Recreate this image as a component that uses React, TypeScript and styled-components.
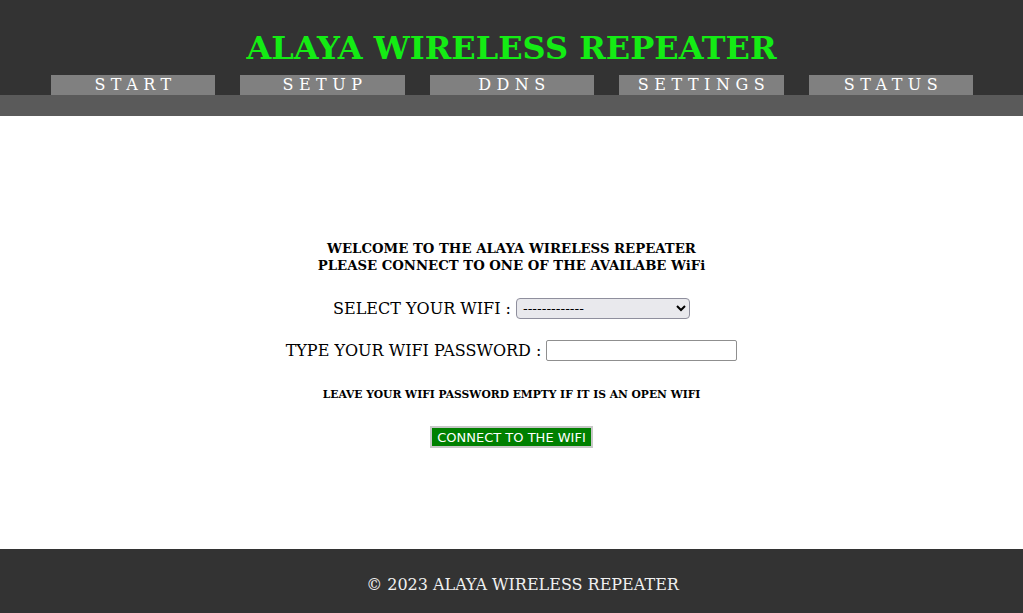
import React from "react";
import styled, { createGlobalStyle } from "styled-components";

const Global = createGlobalStyle`
  html, body { margin: 0; padding: 0; background: #fff; }
  body { font-family: "DejaVu Serif", serif; }
  * { box-sizing: border-box; }
`;

const Header = styled.header`
  background: #333333;
  padding-top: 30px;
  display: flex;
  flex-direction: column;
  align-items: center;
`;

const Title = styled.h1`
  margin: 0;
  font-family: "DejaVu Serif", serif;
  font-weight: bold;
  font-size: 32px;
  line-height: 37px;
  color: #14ec14;
`;

const Nav = styled.nav`
  margin-top: 8px;
  display: flex;
  justify-content: center;
  gap: 25px;
  width: 100%;
  padding-left: 1px;
`;

const NavItem = styled.a`
  width: 164.5px;
  height: 20px;
  background: #808080;
  color: #ffffff;
  font-size: 16px;
  line-height: 20px;
  letter-spacing: 5.5px;
  text-align: center;
  text-decoration: none;
  padding-left: 5px;
`;

const SubBar = styled.div`
  height: 21px;
  background: #5a5a5a;
`;

const Main = styled.main`
  height: 433px;
  padding-top: 124px;
  display: flex;
  flex-direction: column;
  align-items: center;
  color: #000;
`;

const Welcome = styled.h5`
  margin: 0;
  font-size: 13.28px;
  line-height: 17px;
  font-weight: bold;
  text-align: center;
`;

const Row = styled.div<{ $mt: number }>`
  margin-top: ${(p) => p.$mt}px;
  display: flex;
  align-items: center;
  gap: 5px;
  font-size: 16px;
  height: 21px;
`;

const Select = styled.select`
  width: 174px;
  height: 21px;
  font-family: "DejaVu Sans", sans-serif;
  font-size: 13px;
  background: #e9e9ed;
  border: 1px solid #8f8f9d;
  border-radius: 4px;
  padding: 0 2px;
`;

const Input = styled.input`
  width: 191px;
  height: 21px;
  border: 1px solid #8f8f8f;
  border-radius: 2px;
  font-size: 13px;
`;

const Note = styled.h6`
  margin: 27px 0 0;
  font-size: 10.72px;
  line-height: 13px;
  font-weight: bold;
`;

const Button = styled.button`
  margin-top: 25px;
  width: 163px;
  height: 22px;
  background: #008000;
  color: #ffffff;
  border: 2px solid #c8c8c8;
  font-family: "DejaVu Sans", sans-serif;
  font-size: 13px;
  padding: 0;
`;

const Footer = styled.footer`
  background: #333333;
  height: 64px;
  display: flex;
  align-items: center;
  justify-content: center;
  padding-left: 22px;
  padding-top: 6px;
  color: #f0f0f0;
  font-size: 16px;
`;

const items = ["START", "SETUP", "DDNS", "SETTINGS", "STATUS"];

export default function App() {
  return (
    <>
      <Global />
      <Header>
        <Title>ALAYA WIRELESS REPEATER</Title>
        <Nav>
          {items.map((i) => (
            <NavItem key={i} href="#">
              {i}
            </NavItem>
          ))}
        </Nav>
      </Header>
      <SubBar />
      <Main>
        <Welcome>
          WELCOME TO THE ALAYA WIRELESS REPEATER
          <br />
          PLEASE CONNECT TO ONE OF THE AVAILABE WiFi
        </Welcome>
        <Row $mt={24}>
          SELECT YOUR WIFI :
          <Select defaultValue="">
            <option value="">-------------</option>
          </Select>
        </Row>
        <Row $mt={21}>
          TYPE YOUR WIFI PASSWORD :
          <Input type="password" />
        </Row>
        <Note>LEAVE YOUR WIFI PASSWORD EMPTY IF IT IS AN OPEN WIFI</Note>
        <Button>CONNECT TO THE WIFI</Button>
      </Main>
      <Footer>© 2023 ALAYA WIRELESS REPEATER</Footer>
    </>
  );
}
